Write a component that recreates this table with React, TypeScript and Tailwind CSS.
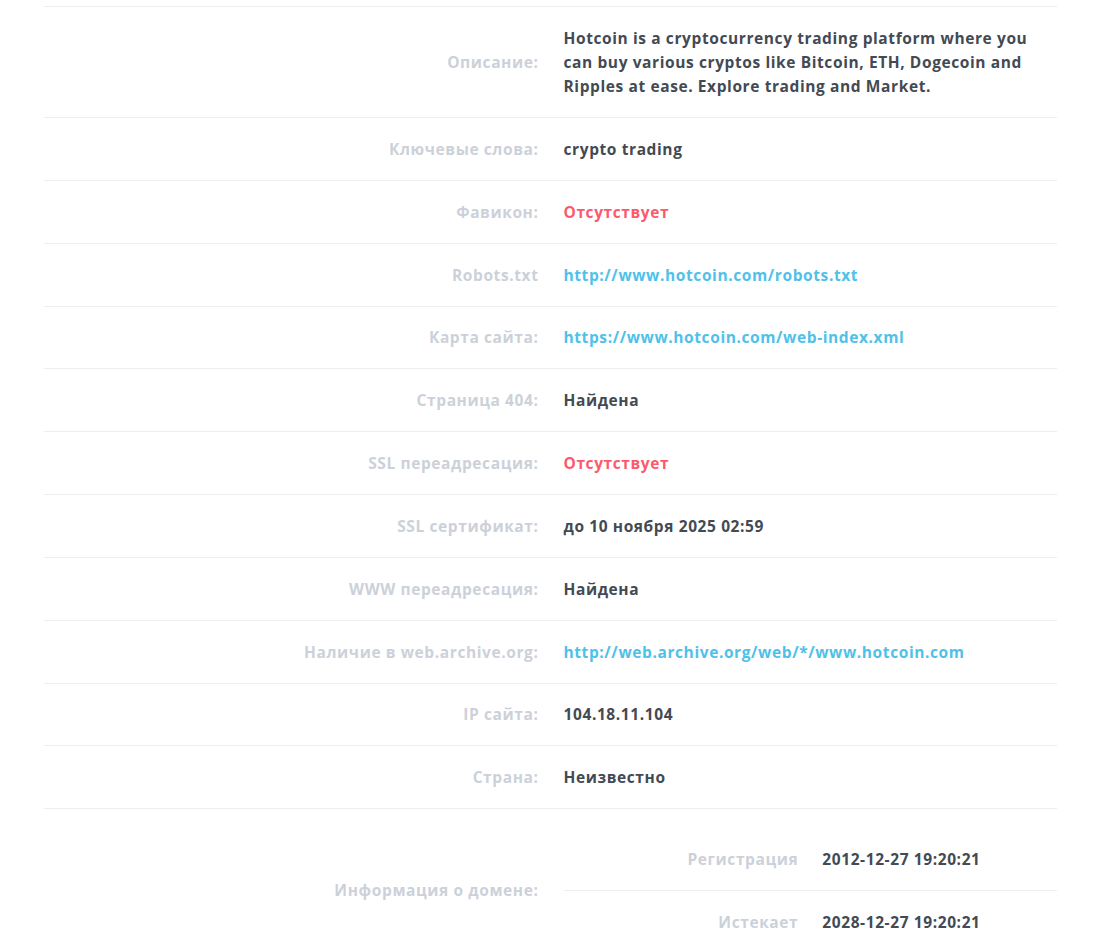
const rows: { label: string; value: string; tone?: "red" | "link" }[] = [
  { label: "Ключевые слова:", value: "crypto trading" },
  { label: "Фавикон:", value: "Отсутствует", tone: "red" },
  { label: "Robots.txt", value: "http://www.hotcoin.com/robots.txt", tone: "link" },
  { label: "Карта сайта:", value: "https://www.hotcoin.com/web-index.xml", tone: "link" },
  { label: "Страница 404:", value: "Найдена" },
  { label: "SSL переадресация:", value: "Отсутствует", tone: "red" },
  { label: "SSL сертификат:", value: "до 10 ноября 2025 02:59" },
  { label: "WWW переадресация:", value: "Найдена" },
  { label: "Наличие в web.archive.org:", value: "http://web.archive.org/web/*/www.hotcoin.com", tone: "link" },
  { label: "IP сайта:", value: "104.18.11.104" },
  { label: "Страна:", value: "Неизвестно" },
];

function toneClass(tone?: "red" | "link") {
  if (tone === "red") return "text-[#fc5a6c]";
  if (tone === "link") return "text-[#4fc1e9]";
  return "text-[#434a54]";
}

export default function App() {
  return (
    <div className="bg-white min-h-[940px] pt-[6px] px-[44px] font-['Open_Sans',sans-serif] font-bold text-[15.5px] leading-[24.17px] tracking-[0.6px]">
      <div className="w-[1013px] border-t border-[#eceef1]">
        {/* Description */}
        <div className="grid grid-cols-2 border-b border-[#eceef1]">
          <div className="px-3 py-[18.83px] flex items-center justify-end text-right text-[#ccd1d9]">Описание:</div>
          <div className="pl-[13px] pr-3 py-[18.83px] text-[#434a54]">
            Hotcoin is a cryptocurrency trading platform where you can buy various cryptos like Bitcoin, ETH, Dogecoin and Ripples at ease. Explore trading and Market.
          </div>
        </div>

        {rows.map((r) => (
          <div key={r.label} className="grid grid-cols-2 border-b border-[#eceef1]">
            <div className="px-3 py-[18.83px] text-right text-[#ccd1d9]">{r.label}</div>
            <div className={`pl-[13px] pr-3 py-[18.83px] ${toneClass(r.tone)}`}>{r.value}</div>
          </div>
        ))}

        {/* Domain info */}
        <div className="grid grid-cols-2">
          <div className="px-3 py-[18.83px] flex items-center justify-end text-right text-[#ccd1d9]">Информация о домене:</div>
          <div className="pl-[13px] py-[18.83px]">
            <div className="grid grid-cols-2 border-b border-[#eceef1]">
              <div className="px-3 py-[18.83px] text-right text-[#ccd1d9]">Регистрация</div>
              <div className="px-3 py-[18.83px] text-[#434a54]">2012-12-27 19:20:21</div>
            </div>
            <div className="grid grid-cols-2">
              <div className="px-3 py-[18.83px] text-right text-[#ccd1d9]">Истекает</div>
              <div className="px-3 py-[18.83px] text-[#434a54]">2028-12-27 19:20:21</div>
            </div>
          </div>
        </div>
      </div>
    </div>
  );
}
